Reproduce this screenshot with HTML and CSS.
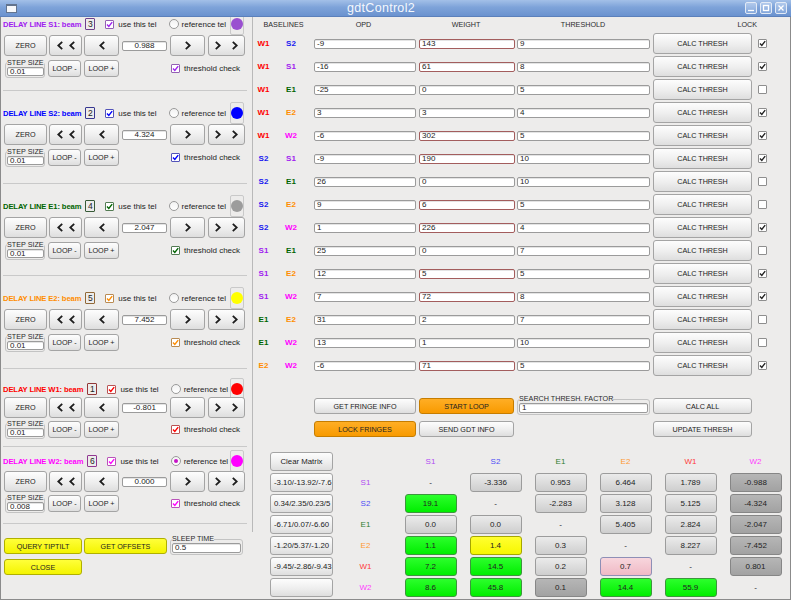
FILE: index.html
```html
<!DOCTYPE html>
<html lang="en">
<head>
  <meta charset="UTF-8" />
  <meta name="viewport" content="width=device-width, initial-scale=1.0" />
  <title>gdtControl2</title>
  <link rel="stylesheet" href="styles.css">
</head>
<body>
  <div class="window">
    <div class="titlebar">
      <span class="app-icon"></span>
      <span class="title">gdtControl2</span>
      <span class="wbtns">
        <span class="wbtn"><svg width="8" height="8" viewBox="0 0 8 8"><path d="M1 6.5h6"/></svg></span>
        <span class="wbtn"><svg width="8" height="8" viewBox="0 0 8 8"><rect x="1.5" y="1.5" width="5" height="5"/></svg></span>
        <span class="wbtn"><svg width="8" height="8" viewBox="0 0 8 8"><path d="M1.5 1.5l5 5M6.5 1.5l-5 5"/></svg></span>
      </span>
    </div>

    <div class="frame">
      <div class="left">
        <div class="scroll" id="delayLines"></div>
        <div class="left-foot">
          <button class="btn yellow">QUERY TIPTILT</button>
          <button class="btn yellow">GET OFFSETS</button>
          <fieldset class="box sleep"><legend>SLEEP TIME</legend><div class="in">0.5</div></fieldset>
          <button class="btn yellow">CLOSE</button>
        </div>
      </div>

      <div class="right">
        <div class="bl-grid" id="baselines">
          <div class="hd hd-bl">BASELINES</div>
          <div class="hd hd-opd">OPD</div>
          <div class="hd hd-w">WEIGHT</div>
          <div class="hd hd-t">THRESHOLD</div>
          <div class="hd hd-lock">LOCK</div>
        </div>

        <div class="actions">
          <button class="btn a-1">GET FRINGE INFO</button>
          <button class="btn orange a-2">START LOOP</button>
          <fieldset class="box search"><legend>SEARCH THRESH. FACTOR</legend><div class="in">1</div></fieldset>
          <button class="btn a-4">CALC ALL</button>
          <button class="btn orange a-1">LOCK FRINGES</button>
          <button class="btn a-2">SEND GDT INFO</button>
          <button class="btn a-4">UPDATE THRESH</button>
        </div>

        <div class="mx" id="matrix"></div>
      </div>
    </div>
  </div>

  <script>
    const delayLines = [
      { id: "s1", name: "S1", beam: 3, val: "0.988", step: "0.01", ref: false },
      { id: "s2", name: "S2", beam: 2, val: "4.324", step: "0.01", ref: false },
      { id: "e1", name: "E1", beam: 4, val: "2.047", step: "0.01", ref: false },
      { id: "e2", name: "E2", beam: 5, val: "7.452", step: "0.01", ref: false },
      { id: "w1", name: "W1", beam: 1, val: "-0.801", step: "0.01", ref: false },
      { id: "w2", name: "W2", beam: 6, val: "0.000", step: "0.008", ref: true }
    ];

    // tel1, tel2, opd, weight, threshold, weight flagged, locked
    const baselines = [
      ["W1", "S2", "-9", "143", "9", true, true],
      ["W1", "S1", "-16", "61", "8", true, true],
      ["W1", "E1", "-25", "0", "5", false, false],
      ["W1", "E2", "3", "3", "4", false, true],
      ["W1", "W2", "-6", "302", "5", true, true],
      ["S2", "S1", "-9", "190", "10", true, true],
      ["S2", "E1", "26", "0", "10", false, false],
      ["S2", "E2", "9", "6", "5", true, false],
      ["S2", "W2", "1", "226", "4", true, true],
      ["S1", "E1", "25", "0", "7", false, false],
      ["S1", "E2", "12", "5", "5", true, true],
      ["S1", "W2", "7", "72", "8", true, true],
      ["E1", "E2", "31", "2", "7", false, false],
      ["E1", "W2", "13", "1", "10", false, false],
      ["E2", "W2", "-6", "71", "5", true, true]
    ];

    const tels = ["S1", "S2", "E1", "E2", "W1", "W2"];
    const fields = ["-3.10/-13.92/-7.6", "0.34/2.35/0.23/5", "-6.71/0.07/-6.60", "-1.20/5.37/-1.20", "-9.45/-2.86/-9.43", ""];
    const matrix = [
      ["-", "-3.336 g", "0.953 g", "6.464 g", "1.789 g", "-0.988 d"],
      ["19.1 n", "-", "-2.283 g", "3.128 g", "5.125 g", "-4.324 d"],
      ["0.0 g", "0.0 g", "-", "5.405 g", "2.824 g", "-2.047 d"],
      ["1.1 n", "1.4 y", "0.3 g", "-", "8.227 g", "-7.452 d"],
      ["7.2 n", "14.5 n", "0.2 g", "0.7 p", "-", "0.801 d"],
      ["8.6 n", "45.8 n", "0.1 d", "14.4 n", "55.9 n", "-"]
    ];

    function chk(on, extra) {
      const mark = on ? '<svg width="7" height="7" viewBox="0 0 7 7"><path d="M1 3.6 2.8 5.4 6.2 1.1"/></svg>' : "";
      return `<span class="chk ${extra || ""}">${mark}</span>`;
    }

    function chev(dir) {
      const d = dir === "l" ? "M5.2 .8 1.3 4.5 5.2 8.2" : "M.8 .8 4.7 4.5 .8 8.2";
      return `<svg class="chev" width="6" height="9" viewBox="0 0 6 9"><path d="${d}"/></svg>`;
    }

    function renderDelayLines() {
      const box = document.getElementById("delayLines");
      box.innerHTML = delayLines.map(dl => `
        <section class="dl dl-${dl.id}">
          <div class="dl-head">
            <span class="dl-title">DELAY LINE ${dl.name}: beam</span>
            <span class="beam-no">${dl.beam}</span>
            ${chk(true, "use")}<span class="lbl">use this tel</span>
            <span class="radio${dl.ref ? " on" : ""}"></span><span class="lbl ref">reference tel</span>
            <span class="swatch"><i></i></span>
          </div>
          <div class="dl-move">
            <button class="btn b-zero">ZERO</button>
            <button class="btn b-ll">${chev("l")}${chev("l")}</button>
            <button class="btn b-l">${chev("l")}</button>
            <div class="in val">${dl.val}</div>
            <button class="btn b-r">${chev("r")}</button>
            <button class="btn b-rr">${chev("r")}${chev("r")}</button>
          </div>
          <div class="dl-step">
            <fieldset class="box step"><legend>STEP SIZE</legend><div class="in">${dl.step}</div></fieldset>
            <button class="btn b-loop">LOOP -</button>
            <button class="btn b-loop2">LOOP +</button>
            ${chk(true, "thr")}<span class="lbl">threshold check</span>
          </div>
        </section>`).join("");
    }

    function renderBaselines() {
      const grid = document.getElementById("baselines");
      baselines.forEach(b => {
        grid.insertAdjacentHTML("beforeend", `
          <div class="tel t-${b[0].toLowerCase()}">${b[0]}</div>
          <div class="tel tel2 t-${b[1].toLowerCase()}">${b[1]}</div>
          <div class="in in-opd">${b[2]}</div>
          <div class="in in-w${b[5] ? " hot" : ""}">${b[3]}</div>
          <div class="in in-t">${b[4]}</div>
          <button class="btn calc">CALC THRESH</button>
          ${chk(b[6], "lock")}`);
      });
    }

    function renderMatrix() {
      const mx = document.getElementById("matrix");
      let html = '<button class="btn field clear">Clear Matrix</button><div></div>';
      tels.forEach(t => { html += `<div class="lab t-${t.toLowerCase()}">${t}</div>`; });
      matrix.forEach((row, r) => {
        html += `<button class="btn field">${fields[r]}</button>`;
        html += `<div class="lab t-${tels[r].toLowerCase()}">${tels[r]}</div>`;
        row.forEach(c => {
          if (c === "-") {
            html += '<div class="dash">-</div>';
          } else {
            const [v, k] = c.split(" ");
            html += `<div class="cell c-${k}">${v}</div>`;
          }
        });
      });
      mx.innerHTML = html;
    }

    renderDelayLines();
    renderBaselines();
    renderMatrix();
  </script>
</body>
</html>
```

FILE: styles.css
```css
/* gdtControl2 window */

body {
  margin: 0;
  background: #edeceb;
  font-family: "Liberation Sans", Arial, sans-serif;
  font-size: 8px;
  color: #232323;
}

.window {
  width: 791px;
  height: 600px;
  display: flex;
  flex-direction: column;
  overflow: hidden;
}

/* title bar */
.titlebar {
  height: 17px;
  box-sizing: border-box;
  flex: none;
  display: flex;
  align-items: center;
  padding: 0 4px 0 6px;
  background: linear-gradient(#a3c0e8, #7ea3d9 45%, #6a92cf);
  border-bottom: 1px solid #5b80bb;
}
.app-icon {
  width: 9px;
  height: 6px;
  border: 1px solid #62748f;
  border-top-width: 2px;
  background: #f6f8fb;
}
.title {
  flex: 1;
  text-align: center;
  color: #f5f8fd;
  font-size: 12.5px;
  letter-spacing: 0.3px;
}
.wbtns {
  display: flex;
  gap: 3px;
}
.wbtn {
  width: 12px;
  height: 12px;
  box-sizing: border-box;
  border: 1px solid #e2eaf6;
  border-radius: 2px;
  background: linear-gradient(#b2caec, #83a7db);
  display: flex;
  align-items: center;
  justify-content: center;
}
.wbtn svg { fill: none; stroke: #fff; stroke-width: 1.3; }

/* frame */
.frame {
  flex: 1;
  min-height: 0;
  display: flex;
  border: 1px solid #8b8b8b;
  border-top: 0;
}
.left {
  width: 252px;
  flex: none;
}
.scroll {
  height: 515px;
  box-sizing: border-box;
  border-right: 1px solid #b9b9b9;
  overflow: hidden;
}
.right {
  flex: 1;
  min-width: 0;
}

/* shared widgets */
.btn {
  box-sizing: border-box;
  margin: 0;
  padding: 0;
  border: 1px solid #a4a4a4;
  border-radius: 3px;
  background: linear-gradient(#fdfdfd, #eeeeee 55%, #dedede);
  font-family: inherit;
  font-size: 7.2px;
  color: #222;
  display: flex;
  align-items: center;
  justify-content: center;
  white-space: nowrap;
}
.btn.yellow {
  background: linear-gradient(#ffff3a, #f4f400);
  border-color: #b0b000;
}
.btn.orange {
  background: linear-gradient(#ffae25, #f89a00);
  border-color: #c67d00;
}
.in {
  box-sizing: border-box;
  height: 10px;
  border: 1px solid #9b9b9b;
  border-radius: 2px;
  background: #fff;
  box-shadow: inset 0 1px 0 #e4e4e4;
  font-size: 8px;
  line-height: 8px;
  padding: 0 2px;
  overflow: hidden;
  white-space: nowrap;
}
.box {
  margin: 0;
  padding: 0 1px 1px;
  min-width: 0;
  border: 1px solid #c3c3c3;
  border-radius: 3px;
  box-sizing: border-box;
  flex: none;
}
.box legend {
  padding: 0;
  font-size: 7.2px;
  line-height: 8px;
  white-space: nowrap;
  color: #2a2a2a;
}
.chk {
  width: 9px;
  height: 9px;
  box-sizing: border-box;
  border: 1px solid #8e8e8e;
  border-radius: 1px;
  background: #fff;
  display: flex;
  align-items: center;
  justify-content: center;
  flex: none;
}
.chk svg { fill: none; stroke: var(--ck, #222); stroke-width: 1.4; }
.chev { fill: none; stroke: #1e1e1e; stroke-width: 1.8; }

/* telescope colours */
.t-s1, .dl-s1 { --c: #a020f0; --sw: #9a50d0; color: #a020f0; }
.t-s2, .dl-s2 { --c: #0000ff; --sw: #0000ff; color: #1818f0; }
.t-e1, .dl-e1 { --c: #006400; --sw: #9c9c9c; color: #006400; }
.t-e2, .dl-e2 { --c: #ff8c00; --sw: #ffff00; color: #ff8c00; }
.t-w1, .dl-w1 { --c: #ff0000; --sw: #ff0000; color: #ff0000; }
.t-w2, .dl-w2 { --c: #ff00ff; --sw: #ff00ff; color: #ff00ff; }

/* delay line groups */
.dl {
  margin: 0 5px 0 2px;
  border-bottom: 1px solid #c9c9c9;
  color: #232323;
  --ck: var(--c);
}
.dl-s1 { padding: 0 0 11px; }
.dl-s2 { padding: 15px 0; }
.dl-e1 { padding: 15px 0 14px; }
.dl-e2 { padding: 15px 0; }
.dl-w1 { padding: 13px 0 6px; }
.dl-w2 { padding: 7px 0 9px; }

.dl-head {
  height: 14px;
  display: flex;
  align-items: center;
  margin-bottom: 4px;
  white-space: nowrap;
}
.dl-head > * { flex: none; }
.dl-w1 .dl-head { margin-bottom: 1px; }
.dl-w2 .dl-head { margin-bottom: 3px; }
.dl-title {
  font-weight: bold;
  font-size: 7.6px;
  letter-spacing: -0.1px;
  color: var(--c);
}
.beam-no {
  margin-left: 4px;
  width: 10px;
  height: 12px;
  box-sizing: border-box;
  border: 1px solid color-mix(in srgb, var(--c) 35%, #555);
  border-radius: 1px;
  text-align: center;
  font-size: 8.5px;
  line-height: 10px;
}
.dl .chk { border-color: color-mix(in srgb, var(--c) 40%, #8a8a8a); }
.chk.use { margin-left: 10px; }
.lbl { margin-left: 4px; font-size: 8px; white-space: nowrap; }
.radio {
  margin-left: 12px;
  width: 10px;
  height: 10px;
  box-sizing: border-box;
  border: 1px solid #9a9a9a;
  border-radius: 50%;
  background: linear-gradient(#f2f2f2, #fff);
  display: flex;
  align-items: center;
  justify-content: center;
}
.radio.on::after {
  content: "";
  width: 4px;
  height: 4px;
  border-radius: 50%;
  background: color-mix(in srgb, var(--c) 70%, #444);
}
.lbl.ref { margin-left: 3px; }
.swatch {
  margin-left: auto;
  margin-right: 3px;
  width: 14px;
  height: 22px;
  box-sizing: border-box;
  border: 1px solid #c9c9c9;
  border-radius: 2px;
  display: flex;
  align-items: center;
  justify-content: center;
}
.dl-w1 .swatch, .dl-w2 .swatch { margin-left: 2px; }
.swatch i {
  width: 12px;
  height: 12px;
  border-radius: 50%;
  background: var(--sw);
}

.dl-move {
  height: 21px;
  display: flex;
  align-items: center;
  padding-left: 1px;
  margin-bottom: 1px;
}
.dl-w1 .dl-move, .dl-w2 .dl-move { margin-bottom: 0; }
.dl-move .btn { height: 21px; }
.b-zero { width: 43px; }
.b-ll { width: 33px; margin-left: 2px; }
.b-l { width: 35px; margin-left: 2px; }
.val { width: 45px; margin-left: 3px; text-align: center; }
.b-r { width: 35px; margin-left: 3px; }
.b-rr { width: 37px; margin-left: 3px; }
.b-ll .chev + .chev { margin-left: 6px; }
.b-rr .chev + .chev { margin-left: 11px; }

.dl-step {
  height: 22px;
  display: flex;
  align-items: center;
  padding-left: 2px;
}
.step { width: 40px; }
.step .in { width: 37px; height: 9px; }
.b-loop { width: 33px; height: 17px; margin-left: 3px; }
.b-loop2 { width: 35px; height: 17px; margin-left: 3px; }
.chk.thr { margin-left: 52px; }

/* bottom left buttons */
.left-foot {
  display: grid;
  grid-template-columns: 78px 83px 74px;
  grid-template-rows: 16px 16px;
  column-gap: 2px;
  row-gap: 5px;
  padding: 6px 0 0 3px;
}
.sleep {
  margin: -3px 0 0 1px;
  align-self: start;
}
.sleep .in { height: 10px; }

/* baselines table */
.bl-grid {
  display: grid;
  grid-template-columns: 21px 40px 105px 98px 136px 102px 1fr;
  grid-template-rows: 15px;
  grid-auto-rows: 23px;
  align-items: center;
}
.hd {
  font-size: 7.2px;
  text-align: center;
  color: #2b2b2b;
}
.hd-bl { grid-column: 1 / 3; }
.hd-opd { padding-right: 6px; }
.hd-w { padding-right: 4px; }
.hd-t { padding-right: 4px; }
.hd-lock {
  grid-column: 6 / 8;
  text-align: right;
  padding-right: 33px;
}
.tel {
  font-weight: bold;
  font-size: 8px;
  text-align: center;
}
.tel2 { padding-right: 6px; }
.in-opd { width: 102px; }
.in-w { width: 96px; }
.in-w.hot { border-color: #a35d5d; }
.in-t { width: 133px; }
.calc { width: 99px; height: 21px; }
.chk.lock { margin-left: 3px; }

/* action buttons */
.actions {
  display: grid;
  grid-template-columns: 61px 105px 98px 136px 102px;
  grid-template-rows: 16px 16px;
  row-gap: 7px;
  margin-top: 21px;
}
.a-1 { grid-column: 2; width: 102px; }
.a-2 { grid-column: 3; width: 95px; }
.a-4 { grid-column: 5; width: 99px; }
.search {
  grid-column: 4;
  grid-row: 1;
  width: 133px;
  margin-top: -3px;
  align-self: start;
}

/* closure matrix */
.mx {
  display: grid;
  grid-template-columns: 63px repeat(7, 65px);
  grid-auto-rows: 21px;
  margin: 14px 0 0 17px;
}
.mx .field {
  width: 63px;
  height: 19px;
  margin-top: 1px;
  justify-content: flex-start;
  padding-left: 3px;
  overflow: hidden;
  font-size: 7.8px;
}
.mx .field.clear { justify-content: center; padding-left: 0; }
.lab, .dash {
  text-align: center;
  align-self: center;
  font-size: 8px;
}
.lab.t-s1 { color: #b04af2; }
.lab.t-s2 { color: #4c4cf6; }
.lab.t-e1 { color: #2f7f2f; }
.lab.t-e2 { color: #ff9a33; }
.lab.t-w1 { color: #ff3a3a; }
.lab.t-w2 { color: #ff3cff; }
.cell {
  width: 52px;
  height: 19px;
  margin-top: 1px;
  justify-self: center;
  box-sizing: border-box;
  border: 1px solid #9c9c9c;
  border-radius: 3px;
  display: flex;
  align-items: center;
  justify-content: center;
  font-size: 8px;
}
.c-g { background: linear-gradient(#ebebeb, #cecece); }
.c-d { background: linear-gradient(#b6b6b6, #a2a2a2); border-color: #868686; }
.c-n { background: linear-gradient(#2cff2c, #00ee00); border-color: #3c963c; }
.c-y { background: linear-gradient(#ffff30, #f7f700); border-color: #a6a600; }
.c-p { background: linear-gradient(#f8d6dd, #efb9c5); border-color: #8e8fb6; }
```
